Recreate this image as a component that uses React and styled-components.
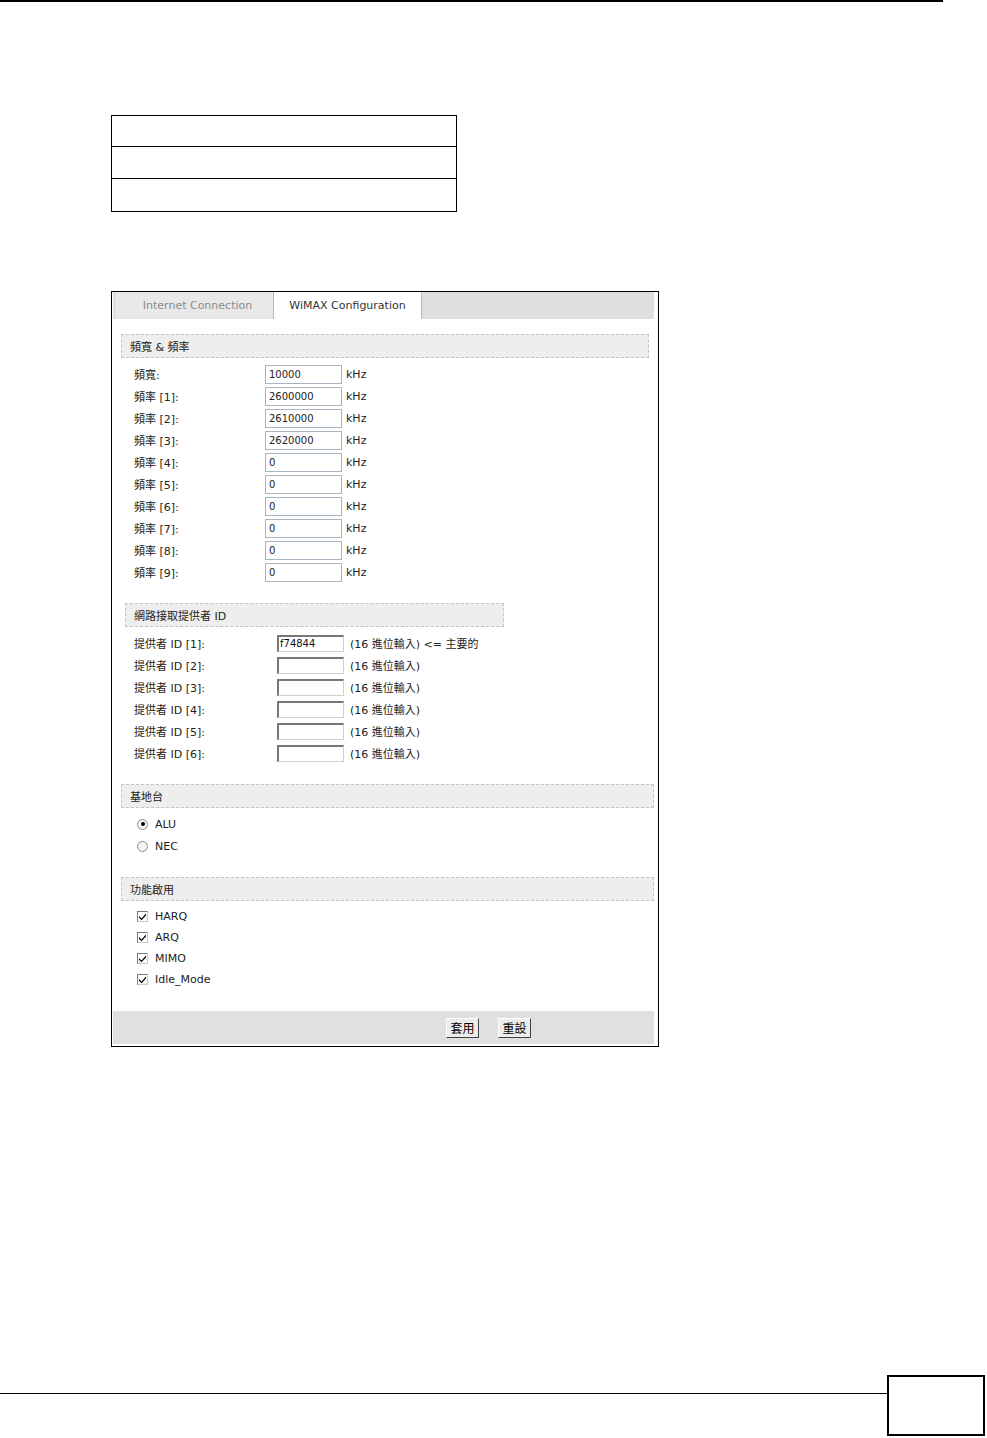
import React from 'react';
import styled, { createGlobalStyle } from 'styled-components';

const GlobalStyle = createGlobalStyle`
  html, body {
    margin: 0;
    padding: 0;
    background: #fff;
  }
  * {
    box-sizing: border-box;
  }
`;

const FONT = `Tahoma, "DejaVu Sans", "Noto Sans CJK TC", sans-serif`;

const freqs = ['10000', '2600000', '2610000', '2620000', '0', '0', '0', '0', '0', '0'];
const providers = ['f74844', '', '', '', '', ''];
const features = ['HARQ', 'ARQ', 'MIMO', 'Idle_Mode'];

const Checkmark = () => (
  <svg width="9" height="9" viewBox="0 0 9 9">
    <path d="M1 4 L3.5 6.5 L8 1.5 L8 3.4 L3.5 8.2 L1 5.8 Z" fill="#000" />
  </svg>
);

const App = () => {
  return (
    <Page>
      <GlobalStyle />
      <TopRule />

      <BlankTable>
        <BlankRow $h={31} />
        <BlankRow $h={32} />
        <BlankRow $h={33} />
      </BlankTable>

      <Panel>
        <TabBar>
          <Tab>Internet Connection</Tab>
          <Tab $active>WiMAX Configuration</Tab>
        </TabBar>

        <Content>
          <SectionHead $right={5}>頻寬 &amp; 頻率</SectionHead>
          <Rows>
            {freqs.map((v, i) => (
              <Row key={i}>
                <Label $w={131}>{i === 0 ? '頻寬:' : `頻率 [${i}]:`}</Label>
                <FreqInput defaultValue={v} readOnly />
                <Unit>kHz</Unit>
              </Row>
            ))}
          </Rows>

          <SectionHead $left={4} $width={379}>網路接取提供者 ID</SectionHead>
          <Rows>
            {providers.map((v, i) => (
              <Row key={i}>
                <Label $w={143}>提供者 ID [{i + 1}]:</Label>
                <IdInput defaultValue={v} readOnly />
                <Hint>(16 進位輸入){i === 0 ? ' <= 主要的' : ''}</Hint>
              </Row>
            ))}
          </Rows>

          <SectionHead>基地台</SectionHead>
          <Rows>
            <ChoiceRow>
              <Radio $on />
              ALU
            </ChoiceRow>
            <ChoiceRow>
              <Radio />
              NEC
            </ChoiceRow>
          </Rows>

          <SectionHead>功能啟用</SectionHead>
          <Rows $last>
            {features.map((f) => (
              <ChoiceRow key={f} $h={21}>
                <Check><Checkmark /></Check>
                {f}
              </ChoiceRow>
            ))}
          </Rows>
        </Content>

        <ButtonBar>
          <Button>套用</Button>
          <Button>重設</Button>
        </ButtonBar>
      </Panel>

      <Footer>
        <FooterLine />
        <PageBox />
      </Footer>
    </Page>
  );
};

export default App;

const Page = styled.div`
  width: 987px;
  height: 1438px;
  display: flex;
  flex-direction: column;
  overflow: hidden;
  background: #fff;
  font-family: ${FONT};
`;

const TopRule = styled.div`
  width: 943px;
  border-top: 2px solid #000;
`;

const BlankTable = styled.div`
  margin: 113px 0 0 111px;
  width: 346px;
  border: 1px solid #000;
  border-bottom: none;
`;

const BlankRow = styled.div`
  height: ${p => p.$h}px;
  border-bottom: 1px solid #000;
`;

const Panel = styled.div`
  margin: 79px 0 0 111px;
  width: 548px;
  border: 1px solid #000;
  padding: 0 4px 2px 1px;
  background: #fff;
`;

const TabBar = styled.div`
  height: 27px;
  display: flex;
  padding-left: 3px;
  background: #dfdfdf;
`;

const Tab = styled.div`
  width: ${p => (p.$active ? 148 : 158)}px;
  display: flex;
  align-items: center;
  justify-content: center;
  padding-left: ${p => (p.$active ? 0 : 6)}px;
  font-size: 11px;
  color: ${p => (p.$active ? '#333' : '#8a8a8a')};
  background: ${p => (p.$active ? '#fff' : '#e9e9e9')};
  border-right: 1px solid #b8b8b8;
`;

const Content = styled.div`
  padding: 15px 0 21px 8px;
`;

const SectionHead = styled.div`
  height: 24px;
  margin-left: ${p => p.$left || 0}px;
  margin-right: ${p => p.$right || 0}px;
  width: ${p => (p.$width ? `${p.$width}px` : 'auto')};
  display: flex;
  align-items: center;
  padding-left: 8px;
  background: #eeeeee;
  border: 1px dashed #c4c4c4;
  font-size: 11px;
  color: #222;
`;

const Rows = styled.div`
  padding: 5px 0 ${p => (p.$last ? 0 : 20)}px 13px;
`;

const Row = styled.div`
  height: 22px;
  display: flex;
  align-items: center;
  font-size: 11px;
  color: #222;
`;

const Label = styled.div`
  width: ${p => p.$w}px;
  flex-shrink: 0;
`;

const FreqInput = styled.input`
  width: 77px;
  height: 19px;
  padding: 0 0 0 3px;
  border: 1px solid #a8b4c2;
  font-family: ${FONT};
  font-size: 10px;
  color: #222;
  outline: none;
`;

const IdInput = styled.input`
  width: 67px;
  height: 17px;
  padding: 0 0 0 1px;
  border-top: 2px solid #777;
  border-left: 2px solid #777;
  border-bottom: 1px solid #d4d0c8;
  border-right: 1px solid #d4d0c8;
  font-family: ${FONT};
  font-size: 10px;
  color: #111;
  outline: none;
`;

const Unit = styled.span`
  margin-left: 4px;
  font-size: 11px;
`;

const Hint = styled.span`
  margin-left: 6px;
  white-space: pre;
`;

const ChoiceRow = styled.div`
  height: ${p => p.$h || 22}px;
  display: flex;
  align-items: center;
  gap: 7px;
  padding-left: 3px;
  font-size: 11px;
  color: #222;
`;

const Radio = styled.span`
  width: 11px;
  height: 11px;
  border-radius: 50%;
  border: 1px solid #8c8c8c;
  background: #f4f4f4;
  display: flex;
  align-items: center;
  justify-content: center;

  &::after {
    content: '';
    display: ${p => (p.$on ? 'block' : 'none')};
    width: 4px;
    height: 4px;
    border-radius: 50%;
    background: #000;
  }
`;

const Check = styled.span`
  width: 11px;
  height: 11px;
  border: 1px solid #7a7a7a;
  border-right-color: #c8c8c8;
  border-bottom-color: #c8c8c8;
  background: #fff;
  display: flex;
  align-items: center;
  justify-content: center;
`;

const ButtonBar = styled.div`
  height: 33px;
  display: flex;
  align-items: center;
  gap: 19px;
  padding-left: 333px;
  background: #e0e0e0;
`;

const Button = styled.button`
  width: 33px;
  height: 20px;
  padding: 0;
  background: #ececec;
  border: 1px solid;
  border-color: #fff #404040 #404040 #fff;
  font-family: "Noto Sans CJK TC", sans-serif;
  font-size: 12px;
  color: #000;
`;

const Footer = styled.div`
  margin-top: auto;
  display: flex;
  align-items: flex-start;
  padding: 0 2px 2px 0;
`;

const FooterLine = styled.div`
  flex: 1;
  margin-top: 18px;
  border-top: 1.5px solid #000;
`;

const PageBox = styled.div`
  width: 98px;
  height: 61px;
  border: 2px solid #000;
`;
